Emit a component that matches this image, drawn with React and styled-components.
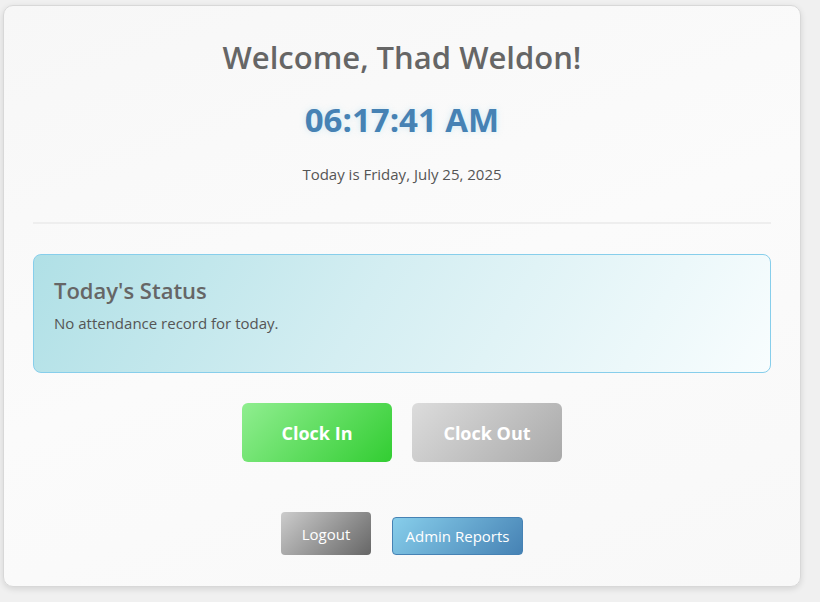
import React from 'react';
import styled, { createGlobalStyle } from 'styled-components';

const GlobalStyle = createGlobalStyle`
	html, body {
		margin: 0;
		padding: 0;
		background: #f0f0f0;
		font-family: 'Open Sans', 'Noto Sans', sans-serif;
	}
`;

const Page = styled.div`
	width: 820px;
	height: 602px;
	padding: 5px 0 0 3px;
	box-sizing: border-box;
`;

const Card = styled.main`
	width: 798px;
	height: 582px;
	box-sizing: border-box;
	padding: 30px 29px;
	border: 1px solid #d8d8d8;
	border-radius: 10px;
	background: linear-gradient(160deg, #f7f7f7 0%, #fbfbfb 50%, #f8f8f8 100%);
	box-shadow: 0 2px 6px rgba(0, 0, 0, 0.12);
	display: flex;
	flex-direction: column;
	align-items: stretch;
	text-align: center;
`;

const Welcome = styled.h1`
	margin: 1px 0 0;
	font-size: 31px;
	font-weight: 600;
	line-height: 40px;
	color: #666;
`;

const Clock = styled.div`
	margin-top: 22px;
	font-size: 33px;
	font-weight: 700;
	line-height: 42px;
	color: #4682b4;
	text-shadow: 0 0 6px rgba(135, 206, 235, 0.35);
`;

const DateLine = styled.p`
	margin: 23px 0 0;
	font-size: 15px;
	line-height: 20px;
	color: #555;
`;

const Divider = styled.hr`
	margin: 38px 0 0;
	border: none;
	height: 2px;
	background: #eeeeee;
`;

const StatusBox = styled.section`
	margin-top: 30px;
	height: 119px;
	box-sizing: border-box;
	padding: 20px 20px;
	border: 1px solid #87ceeb;
	border-radius: 8px;
	background: linear-gradient(120deg, #b0e0e6 0%, #d4eef2 45%, #f8fdfe 100%);
	text-align: left;
`;

const StatusTitle = styled.h2`
	margin: 0;
	font-size: 22px;
	font-weight: 600;
	line-height: 30px;
	color: #666;
`;

const StatusText = styled.p`
	margin: 8px 0 0;
	font-size: 15px;
	line-height: 20px;
	color: #555;
`;

const ButtonRow = styled.div`
	display: flex;
	justify-content: center;
	align-items: flex-end;
	gap: ${props => props.gap}px;
	margin-top: ${props => props.top}px;
`;

const ClockButton = styled.button`
	width: 150px;
	height: 59px;
	border: none;
	border-radius: 6px;
	font-family: inherit;
	font-size: 18px;
	font-weight: 700;
	color: #fff;
	cursor: pointer;
	background: ${props =>
		props.active
			? 'linear-gradient(135deg, #90ee90 0%, #32cd32 100%)'
			: 'linear-gradient(135deg, #dcdcdc 0%, #a9a9a9 100%)'};
`;

const LogoutButton = styled.button`
	width: 90px;
	height: 43px;
	border: none;
	border-radius: 4px;
	font-family: inherit;
	font-size: 15px;
	color: #fff;
	cursor: pointer;
	background: linear-gradient(135deg, #cccccc 0%, #666666 100%);
`;

const AdminButton = styled.button`
	width: 131px;
	height: 38px;
	border: 1px solid #4682b4;
	border-radius: 4px;
	font-family: inherit;
	font-size: 15px;
	color: #fff;
	cursor: pointer;
	background: linear-gradient(135deg, #87ceeb 0%, #4682b4 100%);
`;

const App = () => {
	return (
		<Page>
			<GlobalStyle />
			<Card>
				<Welcome>Welcome, Thad Weldon!</Welcome>
				<Clock>06:17:41 AM</Clock>
				<DateLine>Today is Friday, July 25, 2025</DateLine>
				<Divider />
				<StatusBox>
					<StatusTitle>Today's Status</StatusTitle>
					<StatusText>No attendance record for today.</StatusText>
				</StatusBox>
				<ButtonRow gap={20} top={30}>
					<ClockButton active>Clock In</ClockButton>
					<ClockButton disabled>Clock Out</ClockButton>
				</ButtonRow>
				<ButtonRow gap={21} top={50}>
					<LogoutButton>Logout</LogoutButton>
					<AdminButton>Admin Reports</AdminButton>
				</ButtonRow>
			</Card>
		</Page>
	);
};

export default App;
